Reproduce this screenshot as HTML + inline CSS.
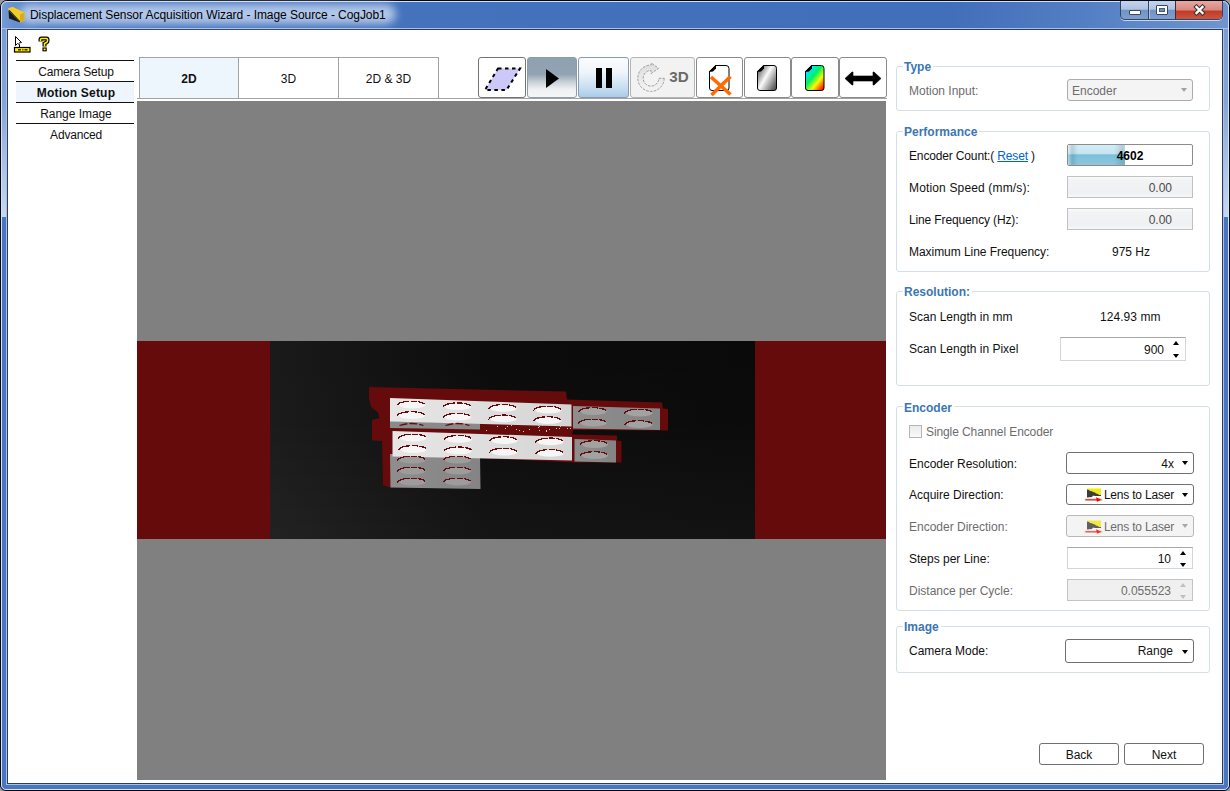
<!DOCTYPE html>
<html><head><meta charset="utf-8">
<style>
*{box-sizing:border-box;margin:0;padding:0}
html,body{width:1230px;height:791px;overflow:hidden;background:#9a9a9a}
body{position:relative;font-family:"Liberation Sans",sans-serif;font-size:12px;line-height:14px;color:#111}
.a{position:absolute}
.t{position:absolute;white-space:nowrap;line-height:14px;font-size:12px}
#frame{position:absolute;left:0;top:0;width:1230px;height:791px;border-radius:7px 7px 6px 6px;background:#4877c0;border:1px solid #000818;overflow:hidden}
#client{position:absolute;left:7px;top:29px;width:1216px;height:755px;background:#fff;border:1px solid #2c3e5c}
.nav{position:absolute;left:16px;width:118px;height:1px;background:#111}
.gb{position:absolute;border:1px solid #d5dfe5;border-radius:3px;left:896px;width:314px}
.gl{position:absolute;font-weight:bold;color:#3b76b4;background:#fff;padding:0 2px 0 1px;white-space:nowrap}
.lbl{position:absolute;left:909px;white-space:nowrap}
.dis{color:#6d6d6d}
.tbtn{position:absolute;top:57px;height:41px;border:1px solid #747474;border-radius:3px;background:#fff}
.tab{position:absolute;top:57px;height:42px;border:1px solid #a3a3a3;background:#fff;text-align:center;line-height:42px}
.combo{position:absolute;border:1px solid #707070;border-radius:3px;background:#fff}
.tri{position:absolute;width:0;height:0;border-left:3.5px solid transparent;border-right:3.5px solid transparent;border-top:4px solid #000}
.triu{position:absolute;width:0;height:0;border-left:3.5px solid transparent;border-right:3.5px solid transparent;border-bottom:4px solid #000}
</style></head><body>
<div id="frame"></div>
<div class="a" style="left:1px;top:1px;width:1228px;height:28px;border-radius:6px 6px 0 0;background:linear-gradient(90deg,rgba(150,180,225,0.6) 0px,rgba(150,180,225,0) 40px,rgba(20,50,130,0.08) 450px,rgba(20,50,130,0.12) 950px,rgba(150,180,225,0.12) 1080px,rgba(150,180,225,0.5) 1229px)"></div>
<div class="a" style="left:1px;top:28px;width:1228px;height:1px;background:#a8c0e8"></div>
<div class="a" style="left:1px;top:1px;width:1228px;height:789px;border:1px solid #d6e2f4;border-radius:6px 6px 5px 5px"></div>
<div class="a" style="left:6px;top:28px;width:1218px;height:757px;border:1px solid #a8c0e8"></div>
<div class="a" style="left:2px;top:29px;width:4px;height:188px;background:linear-gradient(#7b9cd2 0,#86a5d6 40%,#b4c9e8 80%,#c6d7ee 100%)"></div>
<div class="a" style="left:1224px;top:29px;width:4px;height:188px;background:linear-gradient(#7b9cd2 0,#86a5d6 40%,#b4c9e8 80%,#c6d7ee 100%)"></div>
<div id="client"></div>
<div class="a" style="left:20px;top:4px;width:376px;height:20px;border-radius:10px;background:rgba(205,220,244,0.8);filter:blur(4px)"></div>

<!-- title icon -->
<svg class="a" style="left:0;top:0" width="30" height="28" viewBox="0 0 30 28">
<polygon points="8,8.5 12.5,6.8 24.5,12.5 24.5,20.5 20,22.5 8.5,10.5" fill="#efcd28"/>
<polygon points="8.5,10.5 9,18.5 20,22.5" fill="#181818"/>
<polygon points="20,14.5 24.5,12.5 24.5,20.5 20,22.5" fill="#d6ae1a"/>
<polygon points="8.5,10.5 20,22.5 20,21 9.5,10" fill="#222"/>
</svg>
<div class="t" style="left:30px;top:8px;color:#000;letter-spacing:-0.06px">Displacement Sensor Acquisition Wizard - Image Source - CogJob1</div>

<!-- caption buttons -->
<div class="a" style="left:1120px;top:1px;width:103px;height:19px;border:1px solid #34435e;border-top:none;border-radius:0 0 5px 5px;overflow:hidden;background:linear-gradient(#c3d4ec 0,#adc3e3 45%,#7194c6 52%,#7d9ed0 100%);box-shadow:0 1px 0 #c6d6ee">
  <div class="a" style="left:27px;top:0;width:1px;height:19px;background:#34435e"></div>
  <div class="a" style="left:28px;top:0;width:1px;height:19px;background:#d6e2f2;opacity:0.6"></div>
  <div class="a" style="left:54px;top:0;width:48px;height:19px;border-left:1px solid #5a2020;background:linear-gradient(#e6a8a2 0,#d88b82 45%,#c23c27 55%,#cc5a44 100%)"></div>
</div>
<div class="a" style="left:1129px;top:10px;width:12px;height:5px;background:#fff;border:1px solid #3a4660;border-radius:1px"></div>
<div class="a" style="left:1156px;top:5px;width:12px;height:10px;background:#fff;border:1px solid #3a4660;border-radius:1px"></div>
<div class="a" style="left:1159px;top:8px;width:6px;height:4px;background:#6d8fc4;border:1px solid #4a5a78"></div>
<svg class="a" style="left:1193px;top:4px" width="13" height="12" viewBox="0 0 13 12">
<path d="M3.5,3 L9.5,9 M9.5,3 L3.5,9" stroke="#3a3030" stroke-width="4.4" stroke-linecap="square"/>
<path d="M3.5,3 L9.5,9 M9.5,3 L3.5,9" stroke="#fff" stroke-width="2.4" stroke-linecap="square"/>
</svg>

<!-- small toolbar icons -->
<svg class="a" style="left:0;top:30px" width="60" height="26" viewBox="0 30 60 26">
<path d="M15.5,36.5 L15.5,45.5 L17.5,43.5 L19.5,44.5 L19.5,47 M15.5,36.5 L21.5,42.5 L19,43" fill="#fff" stroke="#000" stroke-width="1"/>
<rect x="14.5" y="47.5" width="15.5" height="4.5" fill="#ffee00" stroke="#000" stroke-width="1.2"/>
<rect x="18" y="49.2" width="3" height="1.2" fill="#000"/><rect x="22.3" y="49.2" width="1.2" height="1.2" fill="#000"/><rect x="24.5" y="49.2" width="3" height="1.2" fill="#000"/>
<path d="M40.5,41.5 L40.5,39.5 Q40.5,38.5 41.5,38.5 L46.5,38.5 Q47.5,38.5 47.5,39.5 L47.5,41 Q47.5,42 46.5,42.5 L44.5,43.5 L44.5,46.5" fill="none" stroke="#000" stroke-width="4"/>
<path d="M40.5,41.5 L40.5,39.5 Q40.5,38.5 41.5,38.5 L46.5,38.5 Q47.5,38.5 47.5,39.5 L47.5,41 Q47.5,42 46.5,42.5 L44.5,43.5 L44.5,46.5" fill="none" stroke="#ffee00" stroke-width="1.6"/>
<rect x="43" y="48" width="3.2" height="2.8" fill="#ffee00" stroke="#000" stroke-width="1.1"/>
</svg>

<!-- left nav -->
<div class="nav" style="top:60px"></div>
<div class="a" style="left:16px;top:82px;width:118px;height:20px;background:#eef5fc"></div>
<div class="nav" style="top:81px"></div>
<div class="nav" style="top:102px"></div>
<div class="nav" style="top:123px"></div>
<div class="t" style="left:17px;width:118px;text-align:center;top:65px;letter-spacing:-0.15px">Camera Setup</div>
<div class="t" style="left:17px;width:118px;text-align:center;top:86px;font-weight:bold;letter-spacing:0.2px">Motion Setup</div>
<div class="t" style="left:17px;width:118px;text-align:center;top:107px;letter-spacing:-0.05px">Range Image</div>
<div class="t" style="left:17px;width:118px;text-align:center;top:128px;letter-spacing:-0.2px">Advanced</div>

<!-- tabs -->
<div class="a" style="left:137px;top:98px;width:750px;height:1px;background:#a3a3a3"></div>
<div class="tab" style="left:139px;width:100px;background:#eef6fd;font-weight:bold">2D</div>
<div class="tab" style="left:238px;width:101px">3D</div>
<div class="tab" style="left:338px;width:101px">2D &amp; 3D</div>

<!-- toolbar buttons -->
<div class="tbtn" style="left:478px;width:48px"></div>
<svg class="a" style="left:478px;top:57px" width="48" height="42" viewBox="0 0 48 42">
<polygon points="20,11.5 42,11.5 28.5,33 7,33" fill="#ccc8f8"/>
<polygon points="20,11.5 42,11.5 28.5,33 7,33" fill="none" stroke="#000" stroke-width="2" stroke-dasharray="3.5,3.5"/>
</svg>
<div class="tbtn" style="left:527px;width:50px;border-color:#8d9cac;background:linear-gradient(#8fa1b1 0,#92a3b3 42%,#c9d1d8 62%,#eef0f2 80%,#f5f6f7 100%)"></div>
<svg class="a" style="left:527px;top:57px" width="50" height="42"><polygon points="19,12 19,31 32,21.5" fill="#000"/></svg>
<div class="tbtn" style="left:578px;width:51px;border-color:#8a9bb0;background:linear-gradient(#fbfcfd 0,#f0f5fa 35%,#c9dff1 75%,#aacbe8 100%)"></div>
<div class="a" style="left:596px;top:68px;width:6px;height:20px;background:#000"></div>
<div class="a" style="left:606px;top:68px;width:6px;height:20px;background:#000"></div>
<div class="tbtn" style="left:630px;width:65px;border-color:#b4b4b4;background:#f2f2f2"></div>
<svg class="a" style="left:630px;top:57px" width="65" height="42" viewBox="0 0 65 42">
<defs><linearGradient id="rg" x1="0" y1="0" x2="0" y2="1"><stop offset="0" stop-color="#dcdcdc"/><stop offset="1" stop-color="#f4f4f4"/></linearGradient></defs>
<path d="M34.2,21.3 A13.2,13.2 0 1 1 21,8 L21.3,6 L28.6,11.4 L21,16.6 L21,13.5 A7.8,7.8 0 1 0 28.8,21.3 Z" fill="url(#rg)" stroke="#8c8c8c" stroke-width="0.8" stroke-dasharray="2.6,1.2"/>
<text x="39.3" y="24.8" font-family="Liberation Sans" font-weight="bold" font-size="15.2" fill="#6a6a6a">3D</text>
</svg>
<div class="tbtn" style="left:696px;width:47px;border-color:#8a8a8a"></div>
<svg class="a" style="left:696px;top:57px" width="47" height="42" viewBox="0 0 47 42">
<path d="M13.5,14.5 L19.5,8.5 L30,8.5 Q33,8.5 33,11.5 L33,31 Q33,33.5 30.5,33.5 L16,33.5 Q13.5,33.5 13.5,31 Z" fill="#fff" stroke="#000" stroke-width="1"/>
<polygon points="13,14.5 19.5,8 20,8 20,11.5 17,14.5 13,15" fill="#000"/>
<path d="M15,20 L34.5,37.5 M34.5,19.5 L15.5,38" stroke="#ff6a00" stroke-width="3.6"/>
</svg>
<div class="tbtn" style="left:744px;width:47px;border-color:#8a8a8a"></div>
<svg class="a" style="left:744px;top:57px" width="47" height="42" viewBox="0 0 47 42">
<defs><linearGradient id="gg" x1="0" y1="0" x2="1" y2="0.75"><stop offset="0" stop-color="#3a3a3a"/><stop offset="0.5" stop-color="#fafafa"/><stop offset="1" stop-color="#5a5a5a"/></linearGradient></defs>
<path d="M13.5,14.5 L19.5,8.5 L30,8.5 Q32.5,8.5 32.5,11.5 L32.5,31 Q32.5,33.5 30,33.5 L16,33.5 Q13.5,33.5 13.5,31 Z" fill="url(#gg)" stroke="#000" stroke-width="1"/>
<polygon points="13,14.5 19.5,8 20,8 20,11.5 17,14.5 13,15" fill="#000"/>
</svg>
<div class="tbtn" style="left:791px;width:48px;border-color:#8a8a8a"></div>
<svg class="a" style="left:791px;top:57px" width="48" height="42" viewBox="0 0 48 42">
<defs><linearGradient id="cg" x1="0" y1="0" x2="0.9" y2="1"><stop offset="0" stop-color="#0050ff"/><stop offset="0.2" stop-color="#00e8ff"/><stop offset="0.45" stop-color="#00f060"/><stop offset="0.7" stop-color="#f0ff00"/><stop offset="0.9" stop-color="#ff5000"/><stop offset="1" stop-color="#ff0000"/></linearGradient></defs>
<path d="M14.5,14.5 L20.5,8.5 L30.5,8.5 Q33,8.5 33,11.5 L33,31 Q33,33.5 30.5,33.5 L17,33.5 Q14.5,33.5 14.5,31 Z" fill="url(#cg)" stroke="#000" stroke-width="1"/>
<polygon points="14,14.5 20.5,8 21,8 21,11.5 18,14.5 14,15" fill="#000"/>
</svg>
<div class="tbtn" style="left:839px;width:48px;border-color:#8a8a8a"></div>
<svg class="a" style="left:839px;top:57px" width="48" height="42" viewBox="0 0 48 42">
<polygon points="6,21.5 13,15 14,15 14,19 34,19 34,15 35,15 42,21.5 35,28 34,28 34,24 14,24 14,28 13,28" fill="#000" stroke="#000" stroke-width="0.6" stroke-linejoin="round"/>
</svg>

<!-- image area -->
<div class="a" style="left:137px;top:99px;width:750px;height:2px;background:#fff"></div>
<svg class="a" style="left:137px;top:101px" width="749" height="679" viewBox="137 101 749 679">
<defs>
<linearGradient id="bk" x1="0" y1="0" x2="1" y2="0"><stop offset="0" stop-color="#1a1a1a"/><stop offset="0.45" stop-color="#0c0c0c"/><stop offset="1" stop-color="#0a0a0a"/></linearGradient><linearGradient id="bv" x1="0" y1="0" x2="0" y2="1"><stop offset="0" stop-color="#fff" stop-opacity="0"/><stop offset="0.4" stop-color="#fff" stop-opacity="0.005"/><stop offset="1" stop-color="#fff" stop-opacity="0.036"/></linearGradient>
<linearGradient id="ws" x1="0" y1="0" x2="1" y2="0"><stop offset="0" stop-color="#e6e6e6"/><stop offset="0.5" stop-color="#dedede"/><stop offset="1" stop-color="#d4d4d4"/></linearGradient>
<linearGradient id="gs" x1="0" y1="0" x2="1" y2="0"><stop offset="0" stop-color="#8e8e8e"/><stop offset="1" stop-color="#848484"/></linearGradient>
</defs>
<rect x="137" y="101" width="749" height="679" fill="#808080"/>
<rect x="137" y="341" width="749" height="198" fill="#650b0b"/>
<rect x="270" y="341" width="485" height="198" fill="url(#bk)"/><rect x="270" y="341" width="485" height="198" fill="url(#bv)"/>
<!--PARTS-->
<polygon fill="#650b0b" points="369,387 566,391.5 567,399.5 662,402.5 663,408.5 668,409 668,430.5 573,430 572,434.5 617,435.5 617,440.5 621.5,441 621.5,462.5 574,462.5 480,458 480,487 390,487.5 383,485 382,441 372,440.5 372,420 379.5,418 378,412.5 371,407 369,398"/>
<polygon fill="url(#gs)" points="390,454 480,456 480.5,489 390.5,487.5"/>
<polygon fill="#8a8a8a" points="390,421 480,423.5 480,429.5 390,428"/>
<polygon fill="url(#ws)" points="390,398 571.5,404.5 571.5,426.5 390,421.5"/>
<polygon fill="url(#gs)" points="573,406 660,408.5 660,430 573,428.5"/>
<polygon fill="url(#ws)" points="392.5,431 572,437 572,460.5 392.5,456.5"/>
<polygon fill="url(#gs)" points="574.5,439 616,440.5 616,462.5 574.5,461.5"/>
<ellipse cx="412.0" cy="405.0" rx="13" ry="3.4" fill="#f6f6f6"/><path d="M397.5,405.5 A13.5,4.0 0 0 1 425.0,405.0" fill="none" stroke="#650b0b" stroke-width="1.3" shape-rendering="crispEdges" stroke-dasharray="13,1.5,6,1.2,7"/>
<ellipse cx="412.0" cy="415.5" rx="13" ry="3.4" fill="#f6f6f6"/><path d="M397.5,416.0 A13.5,4.0 0 0 1 425.0,415.5" fill="none" stroke="#650b0b" stroke-width="1.3" shape-rendering="crispEdges" stroke-dasharray="13,1.5,6,1.2,7"/>
<ellipse cx="458.0" cy="406.7" rx="13" ry="3.4" fill="#f6f6f6"/><path d="M443.5,407.2 A13.5,4.0 0 0 1 471.0,406.7" fill="none" stroke="#650b0b" stroke-width="1.3" shape-rendering="crispEdges" stroke-dasharray="13,1.5,6,1.2,7"/>
<ellipse cx="458.0" cy="417.2" rx="13" ry="3.4" fill="#f6f6f6"/><path d="M443.5,417.7 A13.5,4.0 0 0 1 471.0,417.2" fill="none" stroke="#650b0b" stroke-width="1.3" shape-rendering="crispEdges" stroke-dasharray="13,1.5,6,1.2,7"/>
<ellipse cx="503.5" cy="408.4" rx="13" ry="3.4" fill="#f6f6f6"/><path d="M489.0,408.9 A13.5,4.0 0 0 1 516.5,408.4" fill="none" stroke="#650b0b" stroke-width="1.3" shape-rendering="crispEdges" stroke-dasharray="13,1.5,6,1.2,7"/>
<ellipse cx="503.5" cy="418.9" rx="13" ry="3.4" fill="#f6f6f6"/><path d="M489.0,419.4 A13.5,4.0 0 0 1 516.5,418.9" fill="none" stroke="#650b0b" stroke-width="1.3" shape-rendering="crispEdges" stroke-dasharray="13,1.5,6,1.2,7"/>
<ellipse cx="548.5" cy="410.1" rx="13" ry="3.4" fill="#f6f6f6"/><path d="M534.0,410.6 A13.5,4.0 0 0 1 561.5,410.1" fill="none" stroke="#650b0b" stroke-width="1.3" shape-rendering="crispEdges" stroke-dasharray="13,1.5,6,1.2,7"/>
<ellipse cx="548.5" cy="420.6" rx="13" ry="3.4" fill="#f6f6f6"/><path d="M534.0,421.1 A13.5,4.0 0 0 1 561.5,420.6" fill="none" stroke="#650b0b" stroke-width="1.3" shape-rendering="crispEdges" stroke-dasharray="13,1.5,6,1.2,7"/>
<ellipse cx="593.5" cy="411.5" rx="13" ry="3.4" fill="#a2a2a2"/><path d="M579.0,412.0 A13.5,4.0 0 0 1 606.5,411.5" fill="none" stroke="#650b0b" stroke-width="1.3" shape-rendering="crispEdges" stroke-dasharray="13,1.5,6,1.2,7"/>
<ellipse cx="593.5" cy="423.0" rx="13" ry="3.4" fill="#a2a2a2"/><path d="M579.0,423.5 A13.5,4.0 0 0 1 606.5,423.0" fill="none" stroke="#650b0b" stroke-width="1.3" shape-rendering="crispEdges" stroke-dasharray="13,1.5,6,1.2,7"/>
<ellipse cx="639.5" cy="413.0" rx="13" ry="3.4" fill="#a2a2a2"/><path d="M625.0,413.5 A13.5,4.0 0 0 1 652.5,413.0" fill="none" stroke="#650b0b" stroke-width="1.3" shape-rendering="crispEdges" stroke-dasharray="13,1.5,6,1.2,7"/>
<ellipse cx="639.5" cy="424.5" rx="13" ry="3.4" fill="#a2a2a2"/><path d="M625.0,425.0 A13.5,4.0 0 0 1 652.5,424.5" fill="none" stroke="#650b0b" stroke-width="1.3" shape-rendering="crispEdges" stroke-dasharray="13,1.5,6,1.2,7"/>
<path d="M399.5,425.5 Q411.5,421.5 423.5,425.5" fill="none" stroke="#650b0b" stroke-width="1.3" stroke-dasharray="8,2"/>
<path d="M445.5,425.5 Q457.5,421.5 469.5,425.5" fill="none" stroke="#650b0b" stroke-width="1.3" stroke-dasharray="8,2"/>
<ellipse cx="413.5" cy="438.0" rx="13" ry="3.4" fill="#f6f6f6"/><path d="M399.0,438.5 A13.5,4.0 0 0 1 426.5,438.0" fill="none" stroke="#650b0b" stroke-width="1.3" shape-rendering="crispEdges" stroke-dasharray="13,1.5,6,1.2,7"/>
<ellipse cx="413.5" cy="449.5" rx="13" ry="3.4" fill="#f6f6f6"/><path d="M399.0,450.0 A13.5,4.0 0 0 1 426.5,449.5" fill="none" stroke="#650b0b" stroke-width="1.3" shape-rendering="crispEdges" stroke-dasharray="13,1.5,6,1.2,7"/>
<ellipse cx="459.0" cy="439.3" rx="13" ry="3.4" fill="#f6f6f6"/><path d="M444.5,439.8 A13.5,4.0 0 0 1 472.0,439.3" fill="none" stroke="#650b0b" stroke-width="1.3" shape-rendering="crispEdges" stroke-dasharray="13,1.5,6,1.2,7"/>
<ellipse cx="459.0" cy="450.8" rx="13" ry="3.4" fill="#f6f6f6"/><path d="M444.5,451.3 A13.5,4.0 0 0 1 472.0,450.8" fill="none" stroke="#650b0b" stroke-width="1.3" shape-rendering="crispEdges" stroke-dasharray="13,1.5,6,1.2,7"/>
<ellipse cx="504.5" cy="440.6" rx="13" ry="3.4" fill="#f6f6f6"/><path d="M490.0,441.1 A13.5,4.0 0 0 1 517.5,440.6" fill="none" stroke="#650b0b" stroke-width="1.3" shape-rendering="crispEdges" stroke-dasharray="13,1.5,6,1.2,7"/>
<ellipse cx="504.5" cy="452.1" rx="13" ry="3.4" fill="#f6f6f6"/><path d="M490.0,452.6 A13.5,4.0 0 0 1 517.5,452.1" fill="none" stroke="#650b0b" stroke-width="1.3" shape-rendering="crispEdges" stroke-dasharray="13,1.5,6,1.2,7"/>
<ellipse cx="550.5" cy="441.9" rx="13" ry="3.4" fill="#f6f6f6"/><path d="M536.0,442.4 A13.5,4.0 0 0 1 563.5,441.9" fill="none" stroke="#650b0b" stroke-width="1.3" shape-rendering="crispEdges" stroke-dasharray="13,1.5,6,1.2,7"/>
<ellipse cx="550.5" cy="453.4" rx="13" ry="3.4" fill="#f6f6f6"/><path d="M536.0,453.9 A13.5,4.0 0 0 1 563.5,453.4" fill="none" stroke="#650b0b" stroke-width="1.3" shape-rendering="crispEdges" stroke-dasharray="13,1.5,6,1.2,7"/>
<ellipse cx="595.0" cy="444.5" rx="13" ry="3.4" fill="#a2a2a2"/><path d="M580.5,445.0 A13.5,4.0 0 0 1 608.0,444.5" fill="none" stroke="#650b0b" stroke-width="1.3" shape-rendering="crispEdges" stroke-dasharray="13,1.5,6,1.2,7"/>
<ellipse cx="595.0" cy="455.5" rx="13" ry="3.4" fill="#a2a2a2"/><path d="M580.5,456.0 A13.5,4.0 0 0 1 608.0,455.5" fill="none" stroke="#650b0b" stroke-width="1.3" shape-rendering="crispEdges" stroke-dasharray="13,1.5,6,1.2,7"/>
<ellipse cx="412.5" cy="460.0" rx="13" ry="3.4" fill="#9c9c9c"/><path d="M398.0,460.5 A13.5,4.0 0 0 1 425.5,460.0" fill="none" stroke="#650b0b" stroke-width="1.3" shape-rendering="crispEdges" stroke-dasharray="13,1.5,6,1.2,7"/>
<ellipse cx="412.5" cy="471.0" rx="13" ry="3.4" fill="#9c9c9c"/><path d="M398.0,471.5 A13.5,4.0 0 0 1 425.5,471.0" fill="none" stroke="#650b0b" stroke-width="1.3" shape-rendering="crispEdges" stroke-dasharray="13,1.5,6,1.2,7"/>
<ellipse cx="412.5" cy="482.0" rx="13" ry="3.4" fill="#9c9c9c"/><path d="M398.0,482.5 A13.5,4.0 0 0 1 425.5,482.0" fill="none" stroke="#650b0b" stroke-width="1.3" shape-rendering="crispEdges" stroke-dasharray="13,1.5,6,1.2,7"/>
<ellipse cx="458.0" cy="460.0" rx="13" ry="3.4" fill="#9c9c9c"/><path d="M443.5,460.5 A13.5,4.0 0 0 1 471.0,460.0" fill="none" stroke="#650b0b" stroke-width="1.3" shape-rendering="crispEdges" stroke-dasharray="13,1.5,6,1.2,7"/>
<ellipse cx="458.0" cy="471.0" rx="13" ry="3.4" fill="#9c9c9c"/><path d="M443.5,471.5 A13.5,4.0 0 0 1 471.0,471.0" fill="none" stroke="#650b0b" stroke-width="1.3" shape-rendering="crispEdges" stroke-dasharray="13,1.5,6,1.2,7"/>
<ellipse cx="458.0" cy="482.0" rx="13" ry="3.4" fill="#9c9c9c"/><path d="M443.5,482.5 A13.5,4.0 0 0 1 471.0,482.0" fill="none" stroke="#650b0b" stroke-width="1.3" shape-rendering="crispEdges" stroke-dasharray="13,1.5,6,1.2,7"/>
<rect x="505" y="428" width="1" height="1" fill="#c8c8c8"/>
<rect x="516" y="429" width="1" height="1" fill="#c8c8c8"/>
<rect x="538" y="425" width="1" height="1" fill="#c8c8c8"/>
<rect x="486" y="430" width="1" height="1" fill="#c8c8c8"/>
<rect x="507" y="426" width="1" height="1" fill="#c8c8c8"/>
<rect x="570" y="428" width="1" height="1" fill="#c8c8c8"/>
<rect x="556" y="428" width="1" height="1" fill="#c8c8c8"/>
<rect x="539" y="426" width="1" height="1" fill="#c8c8c8"/>
<rect x="539" y="430" width="1" height="1" fill="#c8c8c8"/>
<rect x="529" y="429" width="1" height="1" fill="#c8c8c8"/>
<rect x="542" y="425" width="1" height="1" fill="#c8c8c8"/>
<rect x="549" y="429" width="1" height="1" fill="#c8c8c8"/>
<rect x="511" y="425" width="1" height="1" fill="#c8c8c8"/>
<rect x="559" y="428" width="1" height="1" fill="#c8c8c8"/>
<rect x="546" y="430" width="1" height="1" fill="#c8c8c8"/>
<rect x="546" y="431" width="1" height="1" fill="#c8c8c8"/>
<rect x="519" y="430" width="1" height="1" fill="#c8c8c8"/>
<rect x="523" y="431" width="1" height="1" fill="#c8c8c8"/>
<rect x="560" y="426" width="1" height="1" fill="#c8c8c8"/>
<rect x="497" y="426" width="1" height="1" fill="#c8c8c8"/>
<rect x="567" y="428" width="1" height="1" fill="#c8c8c8"/>
<rect x="538" y="427" width="1" height="1" fill="#c8c8c8"/>
<!--/PARTS-->
</svg>

<!-- right panel -->
<div class="gb" style="top:66px;height:45px"></div>
<div class="gl" style="left:903px;top:60px">Type</div>
<div class="lbl dis" style="top:84px">Motion Input:</div>
<div class="combo" style="left:1067px;top:79px;width:126px;height:22px;border-color:#acacac;background:#f4f4f4"></div>
<div class="t dis" style="left:1072px;top:84px">Encoder</div>
<div class="tri" style="left:1181px;top:88px;border-top-color:#a2a2a2"></div>

<div class="gb" style="top:131px;height:141px"></div>
<div class="gl" style="left:903px;top:125px">Performance</div>
<div class="lbl" style="top:149px;letter-spacing:-0.15px">Encoder Count:( <span style="color:#0066cc;text-decoration:underline">Reset</span> )</div>
<div class="lbl" style="top:181px;letter-spacing:0.15px">Motion Speed (mm/s):</div>
<div class="lbl" style="top:213px;letter-spacing:-0.13px">Line Frequency (Hz):</div>
<div class="lbl" style="top:245px;letter-spacing:-0.05px">Maximum Line Frequency:</div>
<div class="a" style="left:1067px;top:144px;width:126px;height:22px;border:1px solid #8c8c8c;border-radius:2px;background:#fff;overflow:hidden">
  <div class="a" style="left:0;top:0;width:57px;height:20px;background:linear-gradient(90deg,rgba(255,255,255,0.35) 0,rgba(0,50,80,0.14) 4px,rgba(0,0,0,0) 10px,rgba(0,0,0,0) 46px,rgba(0,50,80,0.16) 55px,rgba(0,50,80,0.05) 58px),linear-gradient(#d4ecf4 0,#c6e5f0 42%,#7cbfda 50%,#8cc8dd 100%)"></div>
  <div class="t" style="left:0;width:124px;text-align:center;top:4px;font-weight:bold;color:#000">4602</div>
</div>
<div class="a" style="left:1067px;top:176px;width:126px;height:22px;border:1px solid #c2c2c2;background:linear-gradient(#f9fafb 0,#f1f3f5 18%,#eef0f3 82%,#f6f7f8 100%)"></div>
<div class="t" style="left:1067px;width:105px;text-align:right;top:181px;color:#4a4a4a">0.00</div>
<div class="a" style="left:1067px;top:208px;width:126px;height:22px;border:1px solid #c2c2c2;background:linear-gradient(#f9fafb 0,#f1f3f5 18%,#eef0f3 82%,#f6f7f8 100%)"></div>
<div class="t" style="left:1067px;width:105px;text-align:right;top:213px;color:#4a4a4a">0.00</div>
<div class="t" style="left:1112px;top:245px">975 Hz</div>

<div class="gb" style="top:291px;height:95px"></div>
<div class="gl" style="left:903px;top:285px">Resolution:</div>
<div class="lbl" style="top:310px">Scan Length in mm</div>
<div class="lbl" style="top:342px">Scan Length in Pixel</div>
<div class="t" style="left:1100px;top:310px;letter-spacing:0.05px">124.93 mm</div>
<div class="a" style="left:1060px;top:337px;width:126px;height:24px;border:1px solid #d2d6dc;border-top-color:#a8a8a8;background:#fff"></div>
<div class="t" style="left:1060px;width:104px;text-align:right;top:343px">900</div>
<div class="triu" style="left:1173px;top:341px"></div>
<div class="tri" style="left:1173px;top:354px"></div>

<div class="gb" style="top:406px;height:205px"></div>
<div class="gl" style="left:903px;top:401px">Encoder</div>
<div class="a" style="left:909px;top:425px;width:13px;height:13px;border:1px solid #b5b5b5;background:linear-gradient(#ececec,#f8f8f8)"></div>
<div class="t dis" style="left:926px;top:425px;letter-spacing:-0.1px">Single Channel Encoder</div>
<div class="lbl" style="top:457px">Encoder Resolution:</div>
<div class="lbl" style="top:488px">Acquire Direction:</div>
<div class="lbl dis" style="top:520px">Encoder Direction:</div>
<div class="lbl" style="top:552px">Steps per Line:</div>
<div class="lbl dis" style="top:584px">Distance per Cycle:</div>

<div class="combo" style="left:1066px;top:452px;width:128px;height:22px"></div>
<div class="t" style="left:1066px;width:108px;text-align:right;top:457px">4x</div>
<div class="tri" style="left:1182px;top:461px"></div>
<div class="combo" style="left:1066px;top:484px;width:128px;height:21px"></div>
<div class="t" style="left:1066px;width:108px;text-align:right;top:488px;letter-spacing:-0.2px">Lens to Laser</div>
<div class="tri" style="left:1182px;top:493px"></div>
<div class="combo" style="left:1066px;top:515px;width:128px;height:22px;border-color:#b8b8b8;background:#f4f4f4"></div>
<div class="t dis" style="left:1066px;width:108px;text-align:right;top:520px;letter-spacing:-0.2px">Lens to Laser</div>
<div class="tri" style="left:1182px;top:524px;border-top-color:#a8a8a8"></div>
<svg class="a" style="left:1080px;top:482px;" width="26" height="22" viewBox="0 0 26 22"><rect x="7" y="6.5" width="14" height="7.5" fill="#f2ea10"/><polygon points="7,7.5 9,8 10,9 12,9.3 13,10 15,10.5 16,11.5 18,12 19,13 21,13 21,14 15,14 13,13.5 12,15 7,15.5" fill="#3c3c40"/><rect x="4.5" y="16.5" width="18" height="2.4" rx="1" fill="#d8ccb8"/><rect x="5.5" y="17" width="13" height="1.4" fill="#e04848"/><polygon points="16,15.3 21.5,17.7 17,19.8" fill="#f00000"/></svg>
<svg class="a" style="left:1080px;top:514px;opacity:0.8" width="26" height="22" viewBox="0 0 26 22"><rect x="7" y="6.5" width="14" height="7.5" fill="#f2ea10"/><polygon points="7,7.5 9,8 10,9 12,9.3 13,10 15,10.5 16,11.5 18,12 19,13 21,13 21,14 15,14 13,13.5 12,15 7,15.5" fill="#3c3c40"/><rect x="4.5" y="16.5" width="18" height="2.4" rx="1" fill="#d8ccb8"/><rect x="5.5" y="17" width="13" height="1.4" fill="#e04848"/><polygon points="16,15.3 21.5,17.7 17,19.8" fill="#f00000"/></svg>

<div class="a" style="left:1067px;top:547px;width:126px;height:22px;border:1px solid #d2d6dc;border-top-color:#a8a8a8;background:#fff"></div>
<div class="t" style="left:1067px;width:104px;text-align:right;top:552px">10</div>
<div class="triu" style="left:1180px;top:551px"></div>
<div class="tri" style="left:1180px;top:563px"></div>
<div class="a" style="left:1067px;top:579px;width:126px;height:22px;border:1px solid #c4c4c4;background:#f0f0f0"></div>
<div class="t dis" style="left:1067px;width:104px;text-align:right;top:584px">0.055523</div>
<div class="triu" style="left:1180px;top:583px;border-bottom-color:#c0c0c0"></div>
<div class="tri" style="left:1180px;top:595px;border-top-color:#c0c0c0"></div>

<div class="gb" style="top:626px;height:47px"></div>
<div class="gl" style="left:903px;top:620px">Image</div>
<div class="lbl" style="top:644px">Camera Mode:</div>
<div class="combo" style="left:1065px;top:639px;width:129px;height:24px"></div>
<div class="t" style="left:1065px;width:108px;text-align:right;top:644px">Range</div>
<div class="tri" style="left:1182px;top:650px"></div>

<!-- bottom buttons -->
<div class="a" style="left:1039px;top:743px;width:80px;height:22px;border:1px solid #707070;border-radius:3px;background:#fff"></div>
<div class="t" style="left:1039px;width:80px;text-align:center;top:748px">Back</div>
<div class="a" style="left:1124px;top:743px;width:80px;height:22px;border:1px solid #707070;border-radius:3px;background:#fff"></div>
<div class="t" style="left:1124px;width:80px;text-align:center;top:748px">Next</div>

</body></html>
